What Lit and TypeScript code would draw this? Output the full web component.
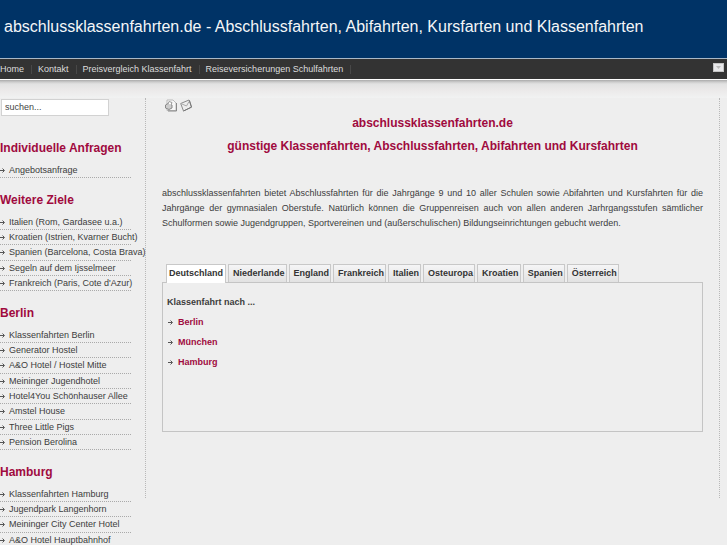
import { LitElement, html, css } from "lit";
import { customElement, state } from "lit/decorators.js";

const NAV = ["Home", "Kontakt", "Preisvergleich Klassenfahrt", "Reiseversicherungen Schulfahrten"];

const MENUS = [
  { title: "Individuelle Anfragen", items: ["Angebotsanfrage"] },
  {
    title: "Weitere Ziele",
    items: [
      "Italien (Rom, Gardasee u.a.)",
      "Kroatien (Istrien, Kvarner Bucht)",
      "Spanien (Barcelona, Costa Brava)",
      "Segeln auf dem Ijsselmeer",
      "Frankreich (Paris, Cote d'Azur)",
    ],
  },
  {
    title: "Berlin",
    items: [
      "Klassenfahrten Berlin",
      "Generator Hostel",
      "A&O Hotel / Hostel Mitte",
      "Meininger Jugendhotel",
      "Hotel4You Schönhauser Allee",
      "Amstel House",
      "Three Little Pigs",
      "Pension Berolina",
    ],
  },
  {
    title: "Hamburg",
    items: ["Klassenfahrten Hamburg", "Jugendpark Langenhorn", "Meininger City Center Hotel", "A&O Hotel Hauptbahnhof"],
  },
];

const TABS = ["Deutschland", "Niederlande", "England", "Frankreich", "Italien", "Osteuropa", "Kroatien", "Spanien", "Österreich"];
const CITIES = ["Berlin", "München", "Hamburg"];

const arrow = html`<svg class="arrow" width="5" height="5" viewBox="0 0 5 5" aria-hidden="true">
  <path d="M0 2.5H4M2.5 .5L4.5 2.5L2.5 4.5" fill="none" stroke="#555" />
</svg>`;

@customElement("app-root")
export class AppRoot extends LitElement {
  @state() private active = 0;

  static styles = css`
    :host {
      display: block;
      height: 100vh;
      overflow: hidden;
      background: #eee;
      color: #3c3c3c;
      font: 9px/15px "Liberation Sans", Arial, sans-serif;
    }
    * { box-sizing: border-box; }
    a { color: inherit; text-decoration: none; }
    ul { list-style: none; margin: 0; padding: 0; }
    .banner {
      height: 58px;
      padding: 17px 4px 0;
      background: #036;
      color: #f4f6f8;
    }
    .banner h1 { margin: 0; font-size: 16px; line-height: 20px; font-weight: 400; white-space: nowrap; }
    .nav {
      display: flex;
      align-items: center;
      height: 22px;
      padding-right: 3px;
      background: #333;
      border-top: 1px solid #a9b8c6;
      border-bottom: 1px solid #fff;
      color: #ddd;
    }
    .links { display: flex; flex: 1; }
    .links li { display: flex; align-items: center; white-space: nowrap; }
    .links li::after { content: ""; width: 1px; height: 9px; margin: 0 6px 0 7px; background: #484848; }
    .toggle {
      display: flex;
      align-items: center;
      justify-content: center;
      width: 11px;
      height: 9px;
      margin-bottom: 3px;
      padding: 0;
      border: 1px solid #c4c4c4;
      background: #e8e8ea;
    }
    .shade { height: 18px; background: linear-gradient(#aaa 0, #ccc 2px, #e2e2e2 4px, #ebe9e9 10px, #f1f2f2 100%); }
    .page { display: flex; align-items: flex-start; }
    .side { width: 145px; flex: none; white-space: nowrap; }
    .search {
      display: block;
      width: 108px;
      height: 17px;
      margin: 1px 0 24px 1px;
      padding: 0 3px 2px;
      border: 1px solid #d2d2d2;
      border-radius: 0;
      background: #fff;
      color: #444;
      font: inherit;
    }
    .menu { margin-bottom: 14px; }
    .menu h2 { margin: 0 0 7px; color: #a00a3e; font-size: 12px; line-height: 16px; }
    .menu li { width: 131px; height: 15px; line-height: 14px; border-bottom: 1px dotted #aaa; }
    .menu li:nth-child(3n) { height: 16px; line-height: 15px; }
    .menu a { display: flex; align-items: center; gap: 4px; }
    .arrow { flex: none; }
    .main {
      flex: 1;
      min-width: 0;
      margin-right: 7px;
      padding: 0 16px 66px;
      border: dotted #b8b8b8;
      border-width: 0 1px;
    }
    .tools { display: flex; gap: 3px; height: 14px; padding: 1px 0 0 3px; }
    .tools a { display: block; height: 13px; }
    .tools svg { display: block; }
    .intro { margin-bottom: 28px; color: #a00a3e; text-align: center; }
    .intro h2 { margin: 0; font-size: 12px; line-height: 23px; }
    .text { margin: 0 0 33px; text-align: justify; }
    .tabs { display: flex; gap: 2px; padding-left: 4px; }
    .tab {
      height: 18px;
      padding: 0 1px 1px 4px;
      border: 1px solid #c8c8c8;
      border-bottom: 0;
      background: linear-gradient(#f5f5f6, #e2e2e2);
      color: #333;
      font: bold 9px/15px "Liberation Sans", Arial, sans-serif;
      white-space: nowrap;
    }
    .tab.on { position: relative; height: 19px; margin-bottom: -1px; padding: 0 2px 2px; background: #fff; }
    .panel { min-height: 150px; padding: 12px 4px; border: 1px solid #c4c4c4; font-weight: 700; }
    .panel p { margin: 0; }
    .cities { padding-top: 2px; }
    .cities a { display: flex; align-items: center; gap: 5px; height: 20px; color: #a00a3e; }
    .cities li { padding-left: 1px; }
  `;

  render() {
    return html`
      <header class="banner"><h1>abschlussklassenfahrten.de - Abschlussfahrten, Abifahrten, Kursfarten und Klassenfahrten</h1></header>
      <nav class="nav">
        <ul class="links">${NAV.map((n) => html`<li><a href="#">${n}</a></li>`)}</ul>
        <button class="toggle" aria-label="Menü">
          <svg width="5" height="4" viewBox="0 0 5 4"><path d="M0 0H5L2.5 3Z" fill="#bbb" /></svg>
        </button>
      </nav>
      <div class="shade"></div>
      <div class="page">
        <aside class="side">
          <input class="search" type="text" aria-label="Suchen" value="suchen..." />
          ${MENUS.map(
            (m) => html`<section class="menu">
              <h2>${m.title}</h2>
              <ul>${m.items.map((i) => html`<li><a href="#">${arrow}${i}</a></li>`)}</ul>
            </section>`
          )}
        </aside>
        <main class="main">
          <div class="tools">
            <a href="#" aria-label="Drucken"><svg width="12" height="13" viewBox="0 0 12 13">
              <path d="M2 1H8L11 4V11.500H2Z" fill="#f7f7f7" stroke="#bbb" />
              <path d="M11.500 4V12H3" fill="none" stroke="#888" />
              <path d="M.5 6L3 4.500L7 6V9L4 10.500L.5 9Z" fill="#ccc" stroke="#888" />
              <path d="M3 5L4 2.500L7 3.500L6 6" fill="#fff" stroke="#999" />
            </svg></a>
            <a href="#" aria-label="E-Mail"><svg width="12" height="13" viewBox="0 0 12 13">
              <path d="M.7 4.500L9 1L11.500 8L3.500 12Z" fill="#eee" stroke="#8c8c8c" />
              <path d="M2 5L6.500 7L9 2.500" fill="none" stroke="#aaa" />
              <path d="M3.500 12L11.500 8.200L9.500 1.500" fill="none" stroke="#777" />
            </svg></a>
          </div>
          <div class="intro">
            <h2>abschlussklassenfahrten.de</h2>
            <h2>günstige Klassenfahrten, Abschlussfahrten, Abifahrten und Kursfahrten</h2>
          </div>
          <p class="text">
            abschlussklassenfahrten bietet Abschlussfahrten für die Jahrgänge 9 und 10 aller Schulen sowie Abifahrten und
            Kursfahrten für die Jahrgänge der gymnasialen Oberstufe. Natürlich können die Gruppenreisen auch von allen anderen
            Jarhrgangsstufen sämtlicher Schulformen sowie Jugendgruppen, Sportvereinen und (außerschulischen)
            Bildungseinrichtungen gebucht werden.
          </p>
          <div class="tabs" role="tablist">
            ${TABS.map(
              (t, i) => html`<button
                class="tab ${i === this.active ? "on" : ""}"
                role="tab"
                aria-selected=${i === this.active}
                @click=${() => (this.active = i)}
              >${t}</button>`
            )}
          </div>
          <section class="panel" role="tabpanel">
            <p>Klassenfahrt nach ...</p>
            <ul class="cities">${CITIES.map((c) => html`<li><a href="#">${arrow}${c}</a></li>`)}</ul>
          </section>
        </main>
      </div>
    `;
  }
}
